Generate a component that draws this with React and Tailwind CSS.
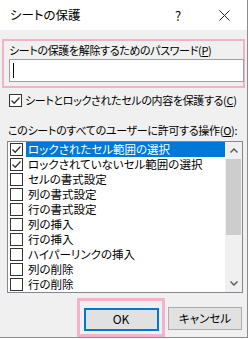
import React from "react";

const font = {
  fontFamily: '"Noto Sans CJK JP", "Noto Sans", sans-serif',
};

function Box({ checked }) {
  return (
    <div className="w-[13px] h-[13px] border border-[#333333] bg-white shrink-0 flex items-center justify-center">
      {checked && (
        <svg width="11" height="11" viewBox="0 0 11 11">
          <path d="M1.5 5.5 L4.2 8.2 L9.5 2.5" fill="none" stroke="#333333" strokeWidth="1.3" />
        </svg>
      )}
    </div>
  );
}

const items = [
  ["ロックされたセル範囲の選択", true, true],
  ["ロックされていないセル範囲の選択", true, false],
  ["セルの書式設定", false, false],
  ["列の書式設定", false, false],
  ["行の書式設定", false, false],
  ["列の挿入", false, false],
  ["行の挿入", false, false],
  ["ハイパーリンクの挿入", false, false],
  ["列の削除", false, false],
  ["行の削除", false, false],
];

export default function App() {
  return (
    <div
      style={font}
      className="w-[248px] h-[338px] bg-[#f0f0f0] border-r border-b border-[#8c8c8c] flex flex-col text-[11px] text-black [font-feature-settings:'palt'] leading-none whitespace-nowrap overflow-hidden"
    >
      <div className="h-[30px] bg-white flex items-center shrink-0">
        <span className="pl-[10px] text-[12.5px]">シートの保護</span>
        <div className="ml-auto flex h-full">
          <div className="w-[46px] flex items-center justify-center text-[13px]">?</div>
          <div className="w-[46px] flex items-center justify-center">
            <svg width="11" height="11" viewBox="0 0 11 11">
              <path d="M0.5 0.5 L10.5 10.5 M10.5 0.5 L0.5 10.5" stroke="#222" strokeWidth="1" />
            </svg>
          </div>
        </div>
      </div>

      <div className="mt-[9px] ml-[2px] w-[243px] h-[49px] border-2 border-[#f2b3c9] flex flex-col">
        <div className="pl-[5px] pt-[2px] h-[17px] flex items-center tracking-[-0.35px]">
          シートの保護を解除するためのパスワード(<span className="underline">P</span>)
        </div>
        <div className="ml-[5px] mt-[1px] w-[235px] h-[23px] bg-white border border-[#a0a0a0] flex items-center pl-[3px]">
          <div className="w-px h-[15px] bg-black" />
        </div>
      </div>

      <div className="mt-[6px] ml-[9px] flex items-center h-[13px] gap-[3px]">
        <Box checked />
        <span className="tracking-[-0.35px]">
          シートとロックされたセルの内容を保護する(<span className="underline">C</span>)
        </span>
      </div>

      <div className="mt-[16px] ml-[8px] h-[14px] flex items-center tracking-[-0.3px]">
        このシートのすべてのユーザーに許可する操作(<span className="underline">O</span>):
      </div>

      <div className="mt-[4px] ml-[7px] w-[236px] h-[152px] bg-white border border-[#828790] flex">
        <div className="flex-1 flex flex-col">
          {items.map(([label, checked, sel]) => (
            <div key={label} className="h-[15px] flex items-center">
              <div className="pl-[2px] pr-[3px]">
                <Box checked={checked} />
              </div>
              <div
                className={
                  "flex-1 h-[15px] flex items-center pl-[2px] text-[11.5px] " +
                  (sel ? "bg-[#0078d7] text-white" : "")
                }
              >
                {label}
              </div>
            </div>
          ))}
        </div>
        <div className="w-[17px] bg-[#f0f0f0] flex flex-col items-center">
          <div className="h-[17px] flex items-center justify-center">
            <svg width="8" height="5" viewBox="0 0 8 5">
              <path d="M0.5 4.5 L4 1 L7.5 4.5" fill="none" stroke="#606060" strokeWidth="1.5" />
            </svg>
          </div>
          <div className="w-[15px] h-[76px] bg-[#cdcdcd]" />
          <div className="flex-1" />
          <div className="h-[17px] flex items-center justify-center">
            <svg width="8" height="5" viewBox="0 0 8 5">
              <path d="M0.5 0.5 L4 4 L7.5 0.5" fill="none" stroke="#606060" strokeWidth="1.5" />
            </svg>
          </div>
        </div>
      </div>

      <div className="mt-[5px] flex items-start">
        <div className="ml-[77px] w-[88px] h-[39px] border-[3px] border-[#f2b3c9] flex items-center justify-center pt-[3px]">
          <div className="w-[75px] h-[23px] bg-[#e1e1e1] border-2 border-[#0078d7] flex items-center justify-center text-[12px]">
            OK
          </div>
        </div>
        <div className="ml-[3px] mt-[9px] w-[74px] h-[23px] bg-[#e1e1e1] border border-[#adadad] flex items-center justify-center text-[11.5px]">
          キャンセル
        </div>
      </div>
    </div>
  );
}
